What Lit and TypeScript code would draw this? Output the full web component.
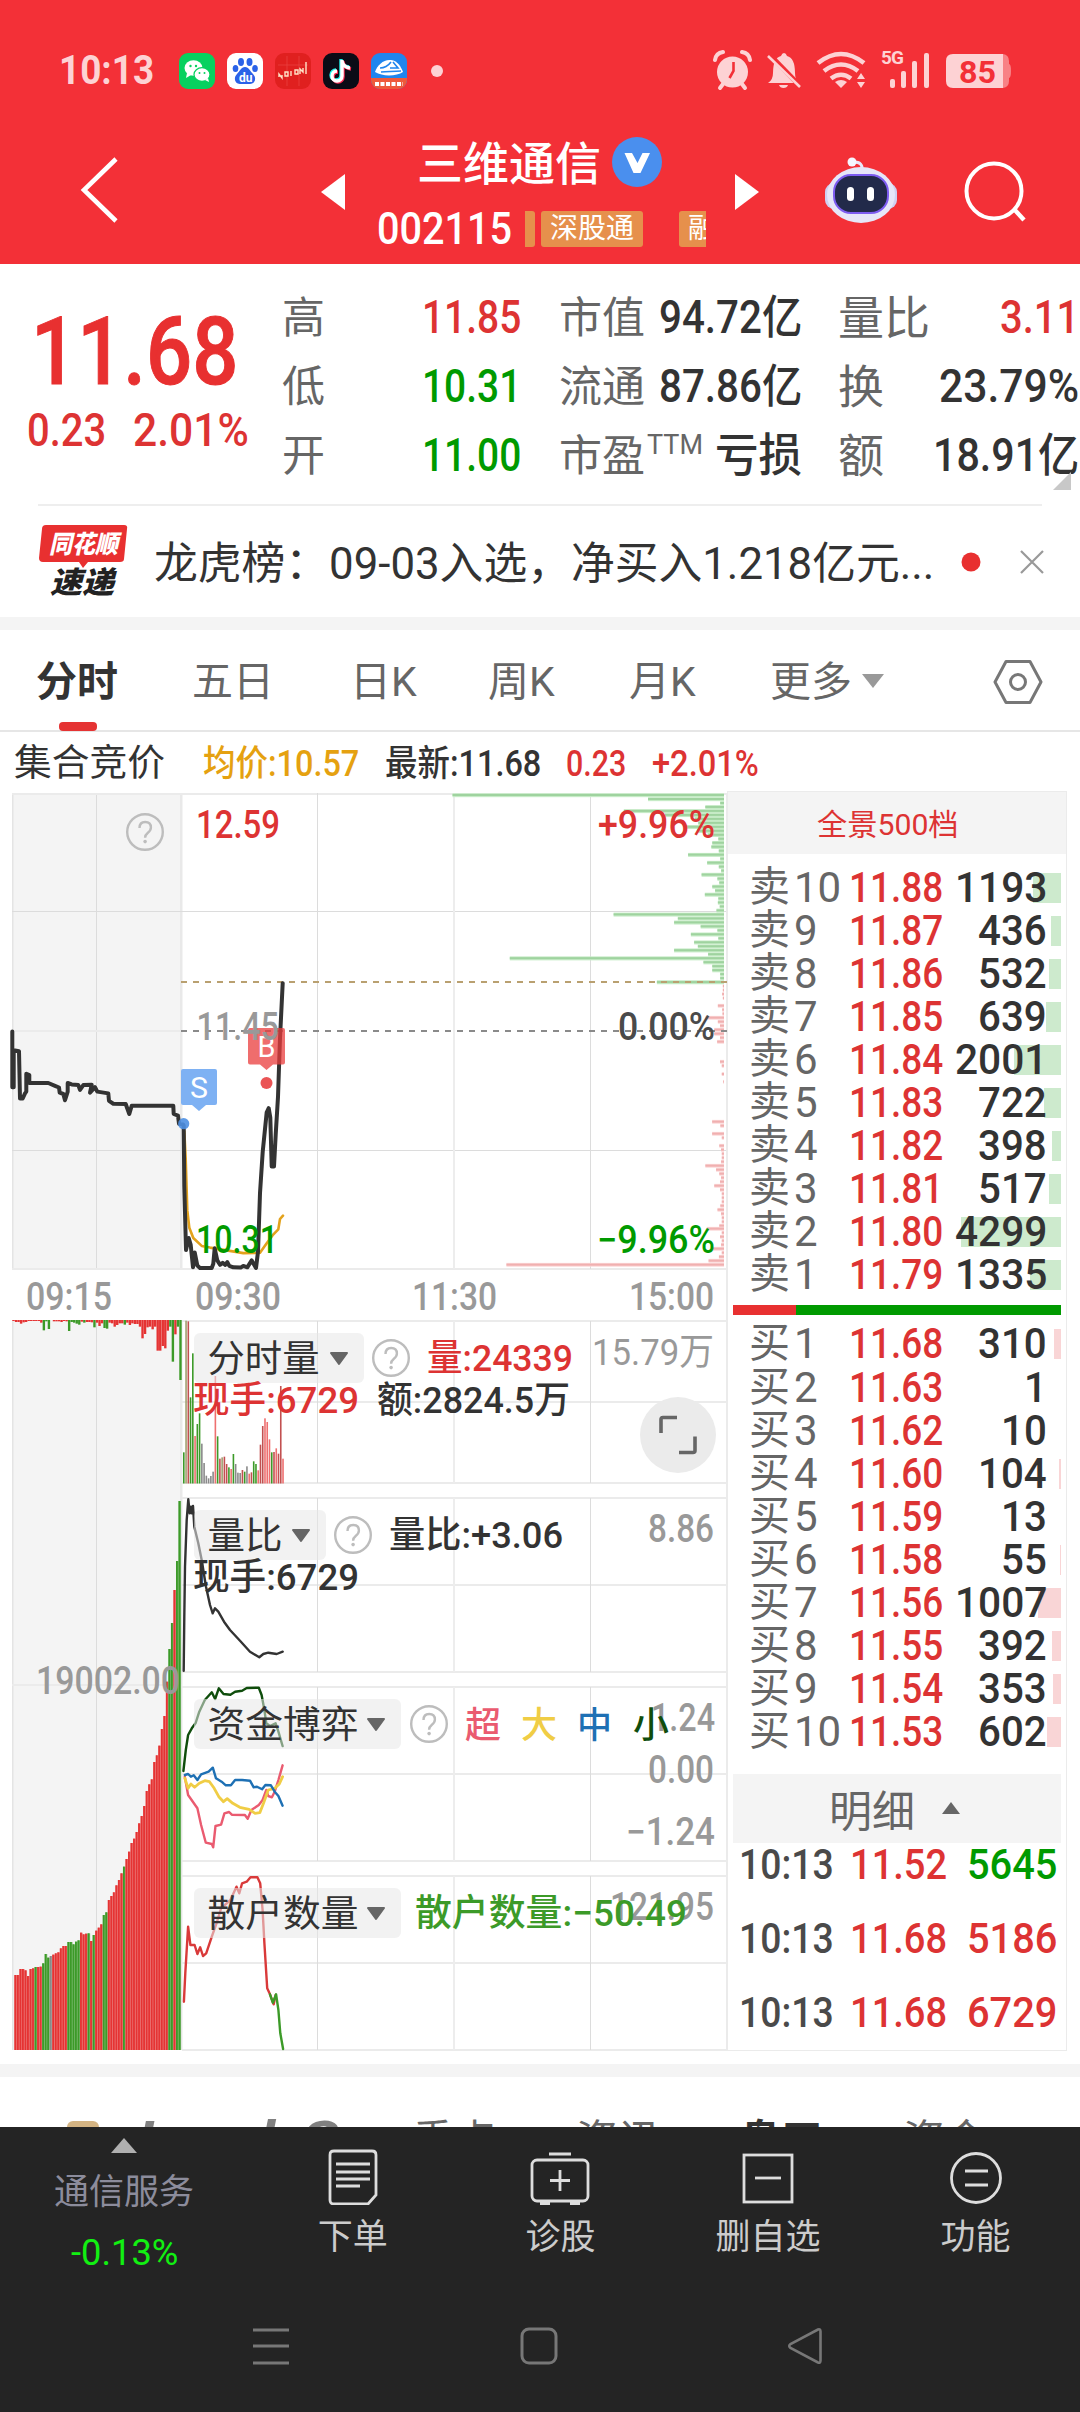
import { LitElement, html, svg, css } from "lit";
import { customElement, property } from "lit/decorators.js";

const FONT = css`Roboto, "Noto Sans CJK SC", sans-serif`;

/* Text squeezed or stretched horizontally to an exact width. */
@customElement("fit-text")
class FitText extends LitElement {
  @property({ type: Number }) w = 0;
  @property() text = "";
  static styles = css`
    :host { display: inline-flex; flex: none; justify-content: flex-start; text-align: left; white-space: nowrap; }
    span { flex: none; transform-origin: 0 50%; }
  `;
  updated() {
    const s = this.renderRoot.querySelector("span") as HTMLElement;
    this.style.width = this.w + "px";
    s.style.transform = `scaleX(${this.w / s.offsetWidth})`;
  }
  render() {
    return html`<span>${this.text}</span>`;
  }
}

const fit = (text: string, w: number, cls = "") =>
  html`<fit-text class=${cls} .text=${text} .w=${w}></fit-text>`;

/* ---------- chart data ---------- */
type P = [number, number, number, number];
const A: P = [0, 780, 3, 2.904];
const B: P = [0, 1300, 3, 3];
const C: P = [0, 1660, 2.148, 3];
const D: P = [0, 640, 2.148, 3];
const E: P = [170, 960, 2.8, 3];
const pts = (p: P, raw: string) =>
  raw.trim().split(" ").map((s) => {
    const [x, y] = s.split(",").map(Number);
    return `${(p[0] + x / p[2]).toFixed(1)},${(p[1] + y / p[3]).toFixed(1)}`;
  }).join(" ");

const AUCTION = pts(A, "37,730 37,892 41,892 41,785 57,788 60,925 68,925 75,910 79,905 79,853 88,857 88,880 145,880 165,888 177,893 179,908 190,912 195,930 203,905 203,880 215,884 235,886 240,900 250,886 275,885 270,908 285,892 292,905 325,910 327,932 340,940 377,941 388,970 395,946 520,946 521,970 534,975 537,998 549,1000");
const PRICE = pts(A, "551,1003 553,1180 558,1365 566,1330 572,1350 579,1415 584,1372 592,1410 600,1417 635,1417 640,1405 644,1360 652,1395 660,1408 668,1402 676,1408 682,1400 688,1411 700,1415 722,1416 730,1411 742,1415 755,1395 768,1417 774,1370 780,1200 788,1080 800,965 806,953 811,980 815,1122 822,1122 827,1030 834,920 840,750 848,590");
const AVG = pts(A, "553,1020 557,1100 562,1250 568,1300 580,1330 605,1353 630,1358 680,1366 730,1374 780,1373 800,1345 818,1322 835,1305 840,1275 849,1265");
const RATIO = pts(B, "551,1112 553,950 555,800 560,660 565,598 569,640 573,620 575,640 579,618 583,680 595,730 605,780 618,860 630,915 638,940 645,925 655,935 672,965 690,990 720,1022 750,1055 778,1072 790,1062 805,1058 830,1062 848,1055");
const SMALL = pts(C, "394,333 399,270 404,225 412,205 420,190 428,155 440,120 455,97 462,117 470,85 480,102 495,104 505,95 520,92 530,84 556,83 562,105 568,150 572,190 580,198 592,190 598,215 607,258");
const HUGE = pts(C, "397,350 404,405 424,445 432,495 442,548 455,552 458,562 463,498 475,494 482,460 492,456 498,464 526,465 532,476 540,450 556,435 564,420 572,390 576,408 584,412 590,395 598,360 607,316");
const LARGE = pts(C, "397,355 404,385 410,372 418,382 428,370 440,362 450,365 460,385 470,410 480,425 488,416 500,430 515,442 535,448 548,460 558,458 566,430 576,390 590,385 600,372 607,350");
const MID = pts(C, "397,345 404,342 410,350 416,346 424,360 432,343 448,335 457,323 464,355 476,365 485,376 496,376 505,360 520,360 537,362 545,382 552,380 563,388 570,375 582,376 590,395 598,408 607,437");
const RETAIL_UP = pts(C, "395,1025 398,940 404,800 409,855 418,855 424,882 430,862 436,888 443,880 455,830 465,790 475,745 495,720 508,680 514,700 520,670 530,665 538,652 553,652 559,670 564,750 568,850 574,985 580,1003 588,1033 592,1005");
const RETAIL_DOWN = pts(C, "580,1003 586,1028 593,1003 598,1050 602,1120 608,1167");

const ASK_DEPTH = [972, 1392, 1547, 1515, 1340, 1428, 1492, 1500, 1470, 1497, 1520, 1543, 1530, 1528, 1544, 1478, 1547, 1519, 1544, 1549, 1507, 1541, 1545, 1530, 1536, 1514, 1543, 1542, 1546, 1539, 1318, 1456, 1448, 1505, 1541, 1484, 1543, 1491, 1499, 1448, 1521, 1095, 1511, 1530, 1530, 1547, 1547, 1411]
  .map((x, i) => [x / D[2], 795 + i * 3.98]);
const BID_DEPTH = "78,1548 90,1548 102,1546 114,1548 137,1534 149,1546 161,1547 173,1500 185,1534 197,1540 209,1524 221,1524 233,1540 245,1532 305,1540 317,1545 342,1545 365,1549 485,1518 497,1541 521,1518 533,1545 557,1538 569,1543 581,1545 593,1545 605,1543 617,1499 629,1529 641,1538 653,1543 665,1540 677,1524 689,1540 701,1545 713,1545 725,1545 737,1541 749,1533 761,1543 773,1545 785,1545 797,1538 806,1503 818,1545 830,1540 842,1545 854,1543 866,1516 878,1545 890,1537 902,1508 914,942"
  .split(" ").map((s) => s.split(",").map(Number)).map(([y, x]) => [E[0] + x / E[2], E[1] + y / E[3]]);

const RED = "#e53333", GREEN = "#3c9a28", GRAY = "#8a8a8a", OLIVE = "#a0a070", DRED = "#c25050", LRED = "#ee7070";
const COL: Record<string, string> = { r: LRED, d: DRED, g: GREEN, y: GRAY, o: OLIVE };
const VOLUME = "457g 62o 64d 292g 160g 408r 372g 340g 431y 489y 527y 535y 528y 515y 228r 409g 476d 472o 470d 492d 502g 507r 462g 492y 518y 519y 510d 515g 499y 521r 517d 484g 492g 511r 434d 378d 355r 366r 418r 457g 456d 445r 461d 258d 476r".split(" ");
const HANGING = "3r 6r 6r 11r 7r 6r 3r 3r 3r 3r 3r 8r 31g 4g 27g 0r 4r 4r 4r 6r 3r 4r 33g 6g 8g 11g 14g 5r 8g 6r 6r 7r 22g 8r 18r 10r 24g 26g 8r 10r 20r 15r 10r 10r 14g 8r 15r 10r 12r 12r 20r 55r 42r 22r 20r 28r 20r 92r 92r 78r 85r 32r 20g 125g 43r 20g 180g".split(" ");
const MATCHED = [945, 945, 927, 927, 931, 948, 927, 925, 921, 921, 920, 910, 882, 893, 888, 884, 880, 877, 865, 858, 858, 846, 846, 853, 845, 841, 818, 823, 821, 820, 843, 825, 812, 803, 793, 765, 757, 720, 708, 697, 676, 660, 640, 620, 597, 575, 549, 536, 516, 490, 468, 438, 393, 373, 358, 306, 286, 257, 207, 168, 65, -33, -111, -210, -297, -477];
const MATCHED_GREEN = new Set([8, 11, 12, 13, 21, 22, 23, 24, 25, 29, 31, 35, 36, 43, 61, 62, 64, 65]);

const label = (x1: number, x2: number, y: number, t: string, fill = "#999", size = 38, weight = 500) =>
  svg`<text x=${x1 - 1} y=${y} fill=${fill} font-size=${size} font-weight=${weight} textLength=${x2 - x1 + 2} lengthAdjust="spacingAndGlyphs">${t}</text>`;
const poly = (p: string, color: string, w: number) =>
  svg`<polyline points=${p} fill="none" stroke=${color} stroke-width=${w} stroke-linejoin="round" stroke-linecap="round"/>`;
const hline = (y: number, x = 182, w = 2, x2 = 727) => svg`<rect x=${x} y=${y - w / 2} width=${x2 - x} height=${w} fill=${w > 1 ? "#ebebeb" : "#dcdcdc"}/>`;
const vlines = (y1: number, y2: number) => svg`
  <rect x="317" y=${y1} width="1" height=${y2 - y1} fill="#dcdcdc"/>
  <rect x="453" y=${y1} width="2" height=${y2 - y1} fill="#ededed"/>
  <rect x="590" y=${y1} width="1" height=${y2 - y1} fill="#dcdcdc"/>`;
const pill = (y: number, w: number, t: string, tw: number) => svg`
  <rect x="194" y=${y} width=${w} height="50" rx="6" fill="#e7e7e7" fill-opacity=".55"/>
  ${label(208.5, 208.5 + tw, y + 39, t, "#333", 37, 400)}
  <path d="M${194 + w - 33} ${y + 20}h16l-8 11z" fill="#666" stroke="#666" stroke-width="2" stroke-linejoin="round"/>`;
const help = (x: number, y: number) => svg`
  <circle cx=${x} cy=${y} r="17.8" fill="none" stroke="#bdbdbd" stroke-width="2.4"/>
  <path d="M${x - 5.5} ${y - 4}q0-6 5.7-6q5.7 0 5.7 5.5q0 3-3 5.2q-2.8 2.2-2.8 5" fill="none" stroke="#bdbdbd" stroke-width="2.4"/>
  <circle cx=${x + 0.1} cy=${y + 9.6} r="1.8" fill="#bdbdbd"/>`;

@customElement("minute-chart")
class MinuteChart extends LitElement {
  static styles = css`
    :host { display: block; flex: none; width: 727px; height: 1264px; }
    svg { display: block; font-family: ${FONT}; }
  `;
  render() {
    return html`<svg width="727" height="1264" viewBox="0 791 727 1264">
      <rect x="12" y="793" width="170" height="476" fill="#f4f4f4"/>
      <rect x="12" y="1320" width="170" height="730" fill="#f4f4f4"/>
      ${[[793, 1269], [1320, 2050]].map(([a, b]) => svg`
        <rect x="12" y=${a} width="1.5" height=${b - a} fill="#e4e4e4"/>
        <rect x="96" y=${a} width="1" height=${b - a} fill="#dcdcdc"/>
        <rect x="180" y=${a} width="2.5" height=${b - a} fill="#e9e9e9"/>`)}
      ${hline(794, 12)}${hline(911.5, 12, 1)}${hline(1031, 12, 2, 182)}${hline(1150.5, 12, 1)}${hline(1269, 12)}
      ${hline(1685, 12, 2, 182)}
      ${vlines(793, 1269)}
      ${[[1321, 1402, 1483], [1498, 1585, 1672], [1687, 1774, 1861], [1876, 1963, 2050]].map(([a, m, b]) =>
        svg`${hline(a)}${hline(m)}${hline(b)}${vlines(a, b)}`)}
      <rect x="726" y="793" width="1" height="1257" fill="#ebebeb"/>

      ${ASK_DEPTH.map(([x, y]) => svg`<rect x=${x} y=${y - 1.8} width=${724 - x} height="3.98" fill="#c6ebc6"/><rect x=${x} y=${y - 1} width=${724 - x} height="2" fill="#9fd39f"/>`)}
      ${BID_DEPTH.map(([x, y]) => svg`<rect x=${x} y=${y - 1.8} width=${724 - x} height="3.8" fill="#fbd5d5"/><rect x=${x} y=${y - 1} width=${724 - x} height="2" fill="#f0b0b0"/>`)}
      <path d="M181 982H727" stroke="#b9a070" stroke-width="2" stroke-dasharray="6 6"/>
      <path d="M181 1031H727" stroke="#8a8a8a" stroke-width="2" stroke-dasharray="6 6"/>

      ${help(145, 832)}
      ${poly(AVG, "#e3a21c", 2.6)}
      ${poly(AUCTION, "#333", 4)}${poly(PRICE, "#333", 4)}
      ${label(197, 279, 837.5, "12.59", "#dd3333")}
      ${label(599, 714, 837.5, "+9.96%", "#dd3333")}
      ${label(619, 714, 1040, "0.00%", "#4a4a4a")}
      ${label(197, 277, 1253, "10.31", "#009a00")}
      ${label(598, 714, 1253, "−9.96%", "#009a00")}
      <path d="M183 1069h32a2 2 0 0 1 2 2v32a2 2 0 0 1-2 2h-9l-7 6l-7-6h-9a2 2 0 0 1-2-2v-32a2 2 0 0 1 2-2z" fill="#7eb1f3"/>
      <circle cx="183.7" cy="1123.7" r="5.6" fill="#4c8fe2" fill-opacity=".9"/>
      ${label(191, 207, 1097.5, "S", "#fff", 29, 400)}
      <path d="M250 1028h33a2 2 0 0 1 2 2v32.500a2 2 0 0 1-2 2h-10l-6.500 5.500l-6.500-5.500h-10a2 2 0 0 1-2-2v-32.500a2 2 0 0 1 2-2z" fill="#e93c3c" fill-opacity=".75"/>
      ${label(258.500, 274.500, 1057, "B", "#fff", 29, 400)}
      <circle cx="266.5" cy="1083" r="6" fill="#ea5455"/>
      ${label(197.500, 278, 1040, "11.45")}
      ${label(27, 111, 1310, "09:15")}${label(196, 280, 1310, "09:30")}${label(413, 496, 1310, "11:30")}${label(630, 713, 1310, "15:00")}

      ${HANGING.map((s, i) => svg`<rect x=${12.300 + i * 2.53} y="1320" width="2.4" height=${parseInt(s) / 3} fill=${s.endsWith("r") ? RED : GREEN}/>`)}
      ${VOLUME.map((s, i) => {
        const top = 1300 + parseInt(s) / 3;
        return svg`<rect x=${183 + i * 2.255} y=${top} width="1.6" height=${1483.500 - top} fill=${COL[s.slice(-1)]}/>`;
      })}
      ${MATCHED.map((v, i) => {
        const top = 1660 + v / 3, x = 14.400 + i * 2.525, f = i === 14 ? GRAY : MATCHED_GREEN.has(i) ? GREEN : RED;
        return svg`<rect x=${x} y=${top} width="2.525" height=${2050 - top} fill=${f} fill-opacity=".65"/><rect x=${x} y=${top} width="1.8" height=${2050 - top} fill=${f}/>`;
      })}
      ${label(37, 179, 1694, "19002.00")}

      ${poly(RATIO, "#333", 2.4)}
      ${poly(HUGE, "#ea5b70", 2.4)}${poly(LARGE, "#f0cd45", 2.8)}${poly(MID, "#1e70b4", 2.4)}${poly(SMALL, "#0f4d0c", 2.4)}
      ${poly(RETAIL_UP, "#d93a3a", 2.4)}${poly(RETAIL_DOWN, "#3c9a28", 2.4)}

      ${pill(1333, 170, "分时量", 110)}${help(391, 1358)}
      ${label(428, 572, 1371, "量:24339", "#dd3333", 37)}
      ${label(593, 713, 1365, "15.79万", "#999", 37, 400)}
      ${label(194, 358, 1413, "现手:6729", "#dd3333", 37)}
      ${label(378, 569, 1413, "额:2824.5万", "#333", 37)}
      <circle cx="678" cy="1435" r="38" fill="#ebebeb"/>
      <path d="M661 1433v-13.500q0-2 2-2h14M679 1452.500h14q2 0 2-2v-14" fill="none" stroke="#666" stroke-width="3.6"/>

      ${pill(1510, 132, "量比", 73)}${help(353, 1535)}
      ${label(390, 562, 1548, "量比:+3.06", "#333", 37)}
      ${label(649, 713, 1541.500, "8.86")}
      ${label(194, 358, 1590, "现手:6729", "#333", 37)}

      ${pill(1699, 207, "资金博弈", 149)}${help(429, 1724)}
      ${label(652, 714, 1731, "1.24")}
      ${label(466, 500, 1738, "超", "#ea5b70", 36)}${label(522, 556, 1738, "大", "#f0cd45", 36)}
      ${label(578, 611, 1738, "中", "#1e70b4", 36)}${label(634, 668, 1738, "小", "#0f4d0c", 36)}
      ${label(649, 713, 1783, "0.00")}
      ${label(627, 714, 1844.500, "−1.24")}

      ${pill(1888, 207, "散户数量", 149)}
      ${label(611, 713, 1920, "121.95")}
      ${label(416, 686, 1926, "散户数量:−50.49", "#3c9a28", 37)}
    </svg>`;
  }
}

/* ---------- order book ---------- */
const ASKS: [string, string, number][] = [["10", "11.88", 1193], ["9", "11.87", 436], ["8", "11.86", 532], ["7", "11.85", 639], ["6", "11.84", 2001], ["5", "11.83", 722], ["4", "11.82", 398], ["3", "11.81", 517], ["2", "11.80", 4299], ["1", "11.79", 1335]];
const BIDS: [string, string, number][] = [["1", "11.68", 310], ["2", "11.63", 1], ["3", "11.62", 10], ["4", "11.60", 104], ["5", "11.59", 13], ["6", "11.58", 55], ["7", "11.56", 1007], ["8", "11.55", 392], ["9", "11.54", 353], ["10", "11.53", 602]];
const TICKS: [string, string, string, string][] = [["10:13", "11.52", "5645", "green"], ["10:13", "11.68", "5186", "red"], ["10:13", "11.68", "6729", "red"]];

@customElement("order-book")
class OrderBook extends LitElement {
  static styles = css`
    :host { display: block; flex: none; box-sizing: border-box; width: 340px; height: 1260px; border: 1px solid #ebebeb; font: 500 42px ${FONT}; color: #333; }
    .head { height: 62px; background: #f4f4f4; display: flex; align-items: center; padding: 0 0 3px 89px; box-sizing: border-box; color: #dd3333; font-size: 30px; font-weight: 400; }
    .side { margin: 12px 5px 0 5px; }
    .bids { margin-top: 7px; }
    .row { position: relative; height: 43.05px; display: grid; grid-template-columns: 45px 55px 100px 1fr; padding: 0 14px 0 16px; line-height: 43px; }
    .lbl { color: #666; font-weight: 400; }
    .k { font-size: 41px; }
    .red { color: #dd3333; }
    .green { color: #009a00; }
    .qty { text-align: right; z-index: 1; }
    .bar { position: absolute; right: 0; top: 7px; height: 30px; background: #cdeacd; }
    .bids .bar { background: #f9d5d6; }
    .split { display: flex; height: 10px; margin: 9px 5px 0 5px; background: #009a00; }
    .split i { width: 63px; background: #e83030; }
    .detail { margin: 21px 5px 0 5px; height: 69px; background: #f4f4f4; display: flex; align-items: center; gap: 27px; padding-left: 96px; box-sizing: border-box; color: #666; font-size: 43px; font-weight: 400; }
    .tick { display: grid; grid-template-columns: 111px 117px 1fr; height: 41px; line-height: 43px; margin: 0 9px 33px 11px; }
    .time { color: #4a4a4a; }
  `;
  side(name: string, rows: [string, string, number][]) {
    return rows.map(([n, p, q]) => html`<div class="row">
      <i class="bar" style="width:${q < 40 ? 0 : q / 43}px"></i>
      <span class="lbl k">${name}</span><span class="lbl">${n === "10" ? fit(n, 47) : n}</span>
      ${fit(p, 94, "red")}<span class="qty">${fit(String(q), String(q).length * 23)}</span></div>`);
  }
  render() {
    return html`
      <div class="head">${fit("全景500档", 142)}</div>
      <div class="side">${this.side("卖", ASKS)}</div>
      <div class="split"><i></i></div>
      <div class="side bids">${this.side("买", BIDS)}</div>
      <div class="detail"><span>明细</span><svg width="18" height="12"><path d="M9 0L18 12H0z" fill="#666"/></svg></div>
      ${TICKS.map(([t, p, v, c]) => html`<div class="tick">${fit(t, 95, "time")}${fit(p, 97, "red")}${fit(v, 90, c)}</div>`)}`;
  }
}

/* ---------- page ---------- */
const STATS: [string, string, number, string, string, string, number, string, string, number, string][] = [
  ["高", "11.85", 99, "red", "市值", "94.72亿", 143, "量比", "3.11", 79, "red"],
  ["低", "10.31", 99, "green", "流通", "87.86亿", 143, "换", "23.79%", 140, ""],
  ["开", "11.00", 99, "green", "市盈", "亏损", 87, "额", "18.91亿", 146, ""],
];

@customElement("app-root")
class AppRoot extends LitElement {
  static styles = css`
    :host { display: block; width: 1080px; height: 2412px; overflow: hidden; background: #fff; font-family: ${FONT}; color: #333; }
    * { box-sizing: border-box; }
    svg { display: block; flex: none; }
    .red { color: #dd3333; }
    .green { color: #009a00; }
    .top { height: 264px; background: #f33037; color: #fff; }
    .status { height: 120px; padding: 22px 69px 0 59px; display: flex; align-items: center; color: #fdd2d4; }
    .clock { font-size: 40px; font-weight: 700; margin: -2px 25px 0 0; }
    .apps { display: flex; gap: 12px; align-items: center; }
    .apps .more { margin-left: 12px; }
    .sys { margin-left: auto; margin-top: -2px; }
    .nav { height: 144px; display: flex; align-items: center; }
    .back { margin: -5px 0 0 80px; }
    .prev { margin-left: 202px; }
    .name { width: 335px; margin: 0 26px 0 29px; height: 126px; }
    .title { display: flex; align-items: center; gap: 11px; margin-left: 43px; height: 50px; margin-top: 8px; font-size: 46px; font-weight: 500; }
    .title fit-text { margin-top: -4px; }
    .code { display: flex; align-items: center; height: 40px; margin: 22px 0 0 3px; font-size: 44px; font-weight: 500; line-height: 40px; }
    .tags { display: flex; align-items: center; margin-left: 13px; width: 181px; overflow: hidden; font-size: 28px; font-weight: 400; }
    .tag { flex: none; height: 36px; line-height: 36px; background: #e6904c; border-radius: 3px; padding: 0 9px; margin-right: 36px; }
    .sliver { flex: none; width: 10px; height: 36px; background: #e6904c; border-radius: 0 3px 3px 0; margin-right: 6px; }
    .robot { margin-left: 65px; }
    .search { margin-left: 66px; }
    .quote { height: 240px; display: flex; position: relative; }
    .px { width: 284px; padding: 43px 0 0 27px; }
    .last { margin-left: 4px; font-size: 95px; font-weight: 500; line-height: 90px; color: #e83030; -webkit-text-stroke: 1px #e83030; }
    .chg { display: flex; gap: 27px; margin-top: 13px; font-size: 47px; line-height: 40px; font-weight: 500; }
    .stats { flex: 1; padding-top: 18px; }
    .srow { height: 69px; display: grid; grid-template-columns: 138px 139px 91px 150px 1fr; align-items: center; font-size: 46px; line-height: 68px; font-weight: 500; }
    .sl { font-size: 43px; font-weight: 400; color: #666; white-space: nowrap; display: flex; position: relative; top: 1px; left: -2px; }
    .end .sl { font-size: 46px; }
    .sl sup { font-size: 27px; line-height: 46px; margin-left: 2px; }
    .mid { text-align: right; }
    .end { display: flex; justify-content: space-between; padding: 0 1px 0 38px; }
    .corner { position: absolute; right: 9px; top: 208px; }
    .rule { height: 2px; background: #eee; margin: 0 38px; }
    .news { height: 111px; display: flex; align-items: center; padding-left: 38px; font-size: 44px; }
    .news > svg:first-child { margin-top: -3px; }
    .news .txt { margin: -3px 27px 0 26px; }
    .news .cross { margin-left: 39px; }
    .band { height: 13px; background: #f4f4f4; }
    .tabs { height: 102px; border-bottom: 2px solid #e6e6e6; display: flex; font-size: 41px; line-height: 105px; color: #666; padding-left: 36px; }
    .tabs span { flex: none; height: 101px; }
    .on { font-weight: 700; color: #333; position: relative; width: 156px; }
    .on::after { content: ""; position: absolute; left: 23px; bottom: 0; width: 38px; height: 9px; border-radius: 4px; background: #e53333; }
    .t2 { width: 158px; } .t3 { width: 138px; } .t4 { width: 141px; } .t5 { width: 141px; } .t6 { width: 91px; }
    .caret { margin-top: 43px; } .hex { margin: 28px 0 0 108px; }
    .info { height: 59px; display: flex; align-items: center; padding: 5px 0 0 14px; font-size: 36px; font-weight: 500; line-height: 40px; }
    .ttl { font-weight: 400; font-size: 37px; margin-right: 38px; }
    .avg { color: #e5a110; margin-right: 26px; } .new { margin-right: 25px; } .d { margin-right: 26px; }
    .main { display: flex; height: 1273px; }
    .peek { height: 50px; display: flex; overflow: hidden; padding: 40px 0 0 67px; font-size: 42px; line-height: 48px; color: #666; }
    .peek .gold { width: 32px; height: 20px; margin: 4px 39px 0 0; border-radius: 6px; background: #d4b483; flex: none; }
    .lv { font-weight: 700; font-style: italic; color: #808080; font-size: 52px; line-height: 54px; margin-right: 72px; margin-top: -3px; display: flex; gap: 27px; }
    .peek span { flex: none; } .a { width: 164px; } .b { width: 163px; } .c { width: 164px; font-weight: 700; color: #333; }
    .bottom { height: 285px; background: #242424; color: #ccc; font-size: 35px; }
    .acts { display: flex; height: 152px; text-align: center; line-height: 40px; padding-left: 20px; }
    .idx { width: 208px; display: flex; flex-direction: column; align-items: center; padding-top: 11px; color: #8c8c9c; }
    .idx .n { margin-top: 20px; }
    .pct { color: #12f012; font-size: 37px; margin-top: 20px; }
    .act { width: 207.600px; display: flex; flex-direction: column; align-items: center; padding-top: 20px; }
    .act svg { margin-bottom: 13px; }
    .act.first { margin-left: 21px; }
    .keys { display: flex; justify-content: space-between; align-items: center; height: 38px; margin: 48px 257px 0 251px; }
  `;
  render() {
    return html`
    <header class="top">
      <div class="status">
        <span class="clock">${fit("10:13", 95)}</span>
        <div class="apps">
          <svg width="36" height="36"><rect width="36" height="36" rx="9" fill="#07d15f"/><ellipse cx="14.500" cy="15" rx="9" ry="7.800" fill="#fff"/><path d="M8 20l-1 5l5-3z" fill="#fff"/><ellipse cx="23" cy="21.500" rx="8" ry="6.800" fill="#fff" stroke="#07d15f" stroke-width="1.2"/><path d="M26 27l4 2l-1-4z" fill="#fff"/><circle cx="11.500" cy="13" r="1.200" fill="#07d15f"/><circle cx="17" cy="13" r="1.200" fill="#07d15f"/><circle cx="20.500" cy="20" r="1" fill="#07d15f"/><circle cx="25.500" cy="20" r="1" fill="#07d15f"/></svg>
          <svg width="36" height="36"><rect width="36" height="36" rx="9" fill="#fff"/><g fill="#2a62e8"><ellipse cx="14" cy="9" rx="3" ry="4"/><ellipse cx="22.500" cy="9" rx="3" ry="4"/><ellipse cx="8.500" cy="15.500" rx="2.800" ry="3.600"/><ellipse cx="28" cy="15.500" rx="2.800" ry="3.600"/><path d="M18 14c4 0 5 4 8 7c4 4 2 10-3 10c-3 0-7 0-10 0c-5 0-7-6-3-10c3-3 4-7 8-7z"/></g><text x="12" y="29" font-size="12" font-weight="700" fill="#fff">du</text></svg>
          <svg width="36" height="36"><rect width="36" height="36" rx="9" fill="#e0201f"/><path d="M12 3v30M24 3v30M3 12h30" stroke="#ea4040" stroke-width=".8"/><path d="M4 24v-3l3 4v-3M10 19h3v4h-3zM16 18v5M20 17h3v4h-3zM25 21v-5l3 3v-4M31 9v12" stroke="#ffe3c8" stroke-width="1.400" fill="none"/></svg>
          <svg width="36" height="36"><rect width="36" height="36" rx="9" fill="#0b0b16"/><path d="M19 7v16a5 5 0 1 1-5-5M19 8q1 6 8 7" transform="translate(-1 -1)" stroke="#25f4ee" stroke-width="3.400" fill="none"/><path d="M19 7v16a5 5 0 1 1-5-5M19 8q1 6 8 7" transform="translate(1 1)" stroke="#fe2c55" stroke-width="3.400" fill="none"/><path d="M19 7v16a5 5 0 1 1-5-5M19 8q1 6 8 7" stroke="#fff" stroke-width="3.400" fill="none"/></svg>
          <svg width="36" height="36"><rect width="36" height="36" rx="9" fill="#1f85ee"/><path d="M0 25h36v2a9 9 0 0 1-9 9H9a9 9 0 0 1-9-9z" fill="#ee5a3c"/><path d="M4 19c2-7 9-13 16-12c7 1 10 7 12 12c-6 4-20 5-28 0z" fill="#fff"/><path d="M9 15c4 0 8-2 11-6M10 19c7 0 12-1 20-1M22 9l5 6h-8" stroke="#1f85ee" stroke-width="1.600" fill="none"/><path d="M4 31h28" stroke="#fff" stroke-width="4" stroke-dasharray="4 1.500"/></svg>
          <svg class="more" width="12" height="12"><circle cx="6" cy="6" r="6" fill="#fdd2d4"/></svg>
        </div>
        <svg class="sys" width="298" height="42" viewBox="713 49 298 42" fill="#fdd2d4">
          <circle cx="732.500" cy="72" r="15.500"/><path d="M715 60q1-7 8-8M750 60q-1-7-8-8" stroke="#fdd2d4" stroke-width="4" fill="none" stroke-linecap="round"/><path d="M723 84l-3 4M742 84l3 4" stroke="#fdd2d4" stroke-width="4" stroke-linecap="round"/><path d="M733.500 62v9l-4 7" stroke="#f33037" stroke-width="2.600" fill="none"/>
          <path d="M768 83q5-3 5-10q0-15 8-17q1-3 3-3t3 3q8 2 8 17q0 7 4 10z"/><path d="M779 85h9q-1 3-4.500 3t-4.500-3z"/><path d="M769 54l32 33" stroke="#f33037" stroke-width="5"/><path d="M768 56l32 31" stroke="#fdd2d4" stroke-width="2.600"/>
          <g fill="none" stroke="#fdd2d4" stroke-width="4.600"><path d="M818 63q23-18 46 0"/><path d="M824 71q17-13 34 0"/><path d="M831 78.500q10-7.500 20 0"/></g><path d="M835 82q6-4 12 0l-6 6z"/><path d="M857 79l4-6l4 6zM857 82h8l-4 6z"/>
          <text x="881" y="64" font-size="19" font-weight="700" textLength="23" font-family="Roboto">5G</text>
          <rect x="890" y="79" width="5" height="9" rx="2"/><rect x="901" y="71" width="5" height="17" rx="2"/><rect x="912" y="61" width="5" height="27" rx="2"/><rect x="924" y="53" width="5" height="35" rx="2"/>
          <path d="M953 54h50v34h-50q-7 0-7-7v-20q0-7 7-7z"/><path d="M1003 54q6 1 6 7v3q2 0 2 7t-2 7v3q0 6-6 7z" fill-opacity=".5"/><text x="959" y="82.500" font-size="31" font-weight="700" fill="#f33037" textLength="37" lengthAdjust="spacingAndGlyphs" font-family="Roboto">85</text>
        </svg>
      </div>
      <div class="nav">
        <svg class="back" width="39" height="66"><path d="M36 2L4 33l32 31" fill="none" stroke="#fff" stroke-width="4.600"/></svg>
        <svg class="prev" width="24" height="36"><path d="M24 0v36L0 18z" fill="#fff"/></svg>
        <div class="name">
          <div class="title">${fit("三维通信", 184)}<svg width="50" height="50"><circle cx="25" cy="25" r="25" fill="#4a8fee"/><path d="M12.500 16h7.500l5.500 10l5-10h7.500l-9.500 20h-7z" fill="#fff"/></svg></div>
          <div class="code">${fit("002115", 135)}<div class="tags"><i class="sliver"></i><span class="tag">深股通</span><span class="tag">融</span></div></div>
        </div>
        <svg class="next" width="24" height="36"><path d="M0 0v36L24 18z" fill="#fff"/></svg>
        <svg class="robot" width="74" height="70" viewBox="824 157 74 70"><path d="M862 170q1-8-8-8" stroke="#e8e8fa" stroke-width="3" fill="none"/><circle cx="852" cy="162" r="4.500" fill="#f6f6ff"/><rect x="825" y="183" width="72" height="26" rx="9" fill="#cfd0f2"/><ellipse cx="861" cy="195" rx="34" ry="28" fill="#e6e6f8"/><rect x="834" y="175" width="54" height="38" rx="17" fill="#222a4a" stroke="#7d5cf0" stroke-width="2"/><rect x="847" y="187" width="7" height="14" rx="3.500" fill="#fff"/><rect x="867" y="187" width="7" height="14" rx="3.500" fill="#fff"/></svg>
        <svg class="search" width="64" height="62" viewBox="964 161 64 62"><circle cx="994" cy="191" r="27.500" fill="none" stroke="#fff" stroke-width="4"/><path d="M1014 209l10 11" stroke="#fff" stroke-width="4.400"/></svg>
      </div>
    </header>
    <section class="quote">
      <div class="px">
        ${fit("11.68", 207, "last")}
        <div class="chg red">${fit("0.23", 79)}${fit("2.01%", 116)}</div>
      </div>
      <div class="stats">
        ${STATS.map((s) => html`<div class="srow">
          <span class="sl">${s[0]}</span>${fit(s[1], s[2], s[3])}
          <span class="sl">${s[4]}${s[4] === "市盈" ? html`<sup>TTM</sup>` : ""}</span>
          <span class="mid">${fit(s[5], s[6])}</span>
          <span class="end"><span class="sl">${s[7]}</span>${fit(s[8], s[9], s[10])}</span></div>`)}
      </div>
      <svg class="corner" width="18" height="18"><path d="M18 0v18H0z" fill="#c8c8c8"/></svg>
    </section>
    <div class="rule"></div>
    <section class="news">
      <svg width="90" height="74" viewBox="38 522 90 74"><path d="M46 524h78q4 0 3 4l-3 30q0 3-4 3h-32l-5 6l-4-6h-36q-4 0-4-4l3-29q0-4 4-4z" fill="#e83030"/><g font-weight="900" font-style="italic" font-family="Noto Sans CJK SC"><text x="49" y="552" font-size="25" fill="#fff" textLength="69" lengthAdjust="spacingAndGlyphs">同花顺</text><text x="50" y="592" font-size="30" fill="#222" textLength="64" lengthAdjust="spacingAndGlyphs">速递</text></g></svg>
      ${fit("龙虎榜：09-03入选，净买入1.218亿元...", 780, "txt")}
      <svg width="20" height="20"><circle cx="10" cy="10" r="9.500" fill="#e83030"/></svg>
      <svg class="cross" width="24" height="24"><path d="M1 1l22 22M23 1L1 23" stroke="#999" stroke-width="2.200"/></svg>
    </section>
    <div class="band"></div>
    <nav class="tabs">
      <span class="on">分时</span><span class="t2">五日</span><span class="t3">日K</span><span class="t4">周K</span><span class="t5">月K</span><span class="t6">更多</span>
      <svg class="caret" width="24" height="16"><path d="M1 1h22L12 15z" fill="#999"/></svg>
      <svg class="hex" width="50" height="48"><path d="M13 3.500h24L48 24L37 44.500H13L2 24z" fill="none" stroke="#777" stroke-width="3" stroke-linejoin="round"/><circle cx="25" cy="24" r="7.500" fill="none" stroke="#777" stroke-width="3"/></svg>
    </nav>
    <div class="info">
      <span class="ttl">${fit("集合竞价", 151)}</span>${fit("均价:10.57", 156, "avg")}${fit("最新:11.68", 156, "new")}${fit("0.23", 60, "d red")}${fit("+2.01%", 107, "red")}
    </div>
    <main class="main"><minute-chart></minute-chart><order-book></order-book></main>
    <div class="band"></div>
    <div class="peek"><i class="gold"></i><span class="lv">${fit("Level", 137)}${fit("2", 38)}</span><span class="a">重点</span><span class="b">资讯</span><span class="c">盘口</span><span>资金</span></div>
    <footer class="bottom">
      <div class="acts">
        <div class="idx"><svg width="26" height="15"><path d="M13 0l13 15H0z" fill="#b0b0b0"/></svg><span class="n">通信服务</span><span class="pct">${fit("-0.13%", 107)}</span></div>
        <div class="act first"><svg width="52" height="58" fill="none" stroke="#ddd" stroke-width="2.800"><path d="M7 4h38q4 0 4 4v40l-8 9H7q-4 0-4-4V8q0-4 4-4zM9 17h34M9 25h34M9 32h34M9 39h24"/></svg>下单</div>
        <div class="act"><svg width="60" height="58" fill="none" stroke="#ddd" stroke-width="2.800"><rect x="2" y="13" width="56" height="41" rx="5"/><path d="M19 7h22M30 23v21M20 33.500h20"/><path d="M10 56h10M40 56h10" stroke-width="4"/></svg>诊股</div>
        <div class="act"><svg width="52" height="58" fill="none" stroke="#ddd" stroke-width="2.800"><rect x="2" y="8" width="48" height="47"/><path d="M13 31h26"/></svg>删自选</div>
        <div class="act"><svg width="52" height="58" fill="none" stroke="#ddd" stroke-width="2.800"><circle cx="26" cy="31" r="24.500"/><path d="M15 24h23M15 38h23"/></svg>功能</div>
      </div>
      <div class="keys">
        <svg width="40" height="38" stroke="#777" stroke-width="3"><path d="M2 3h36M2 19h36M2 36h36"/></svg>
        <svg width="38" height="38" fill="none" stroke="#777" stroke-width="3"><rect x="2" y="2" width="34" height="34" rx="7"/></svg>
        <svg width="36" height="38" fill="none" stroke="#777" stroke-width="2.600"><path d="M31 2.500q2.500-1 2.500 2v29q0 3-2.500 2L3.500 21q-2.500-2 0-4z"/></svg>
      </div>
    </footer>`;
  }
}
